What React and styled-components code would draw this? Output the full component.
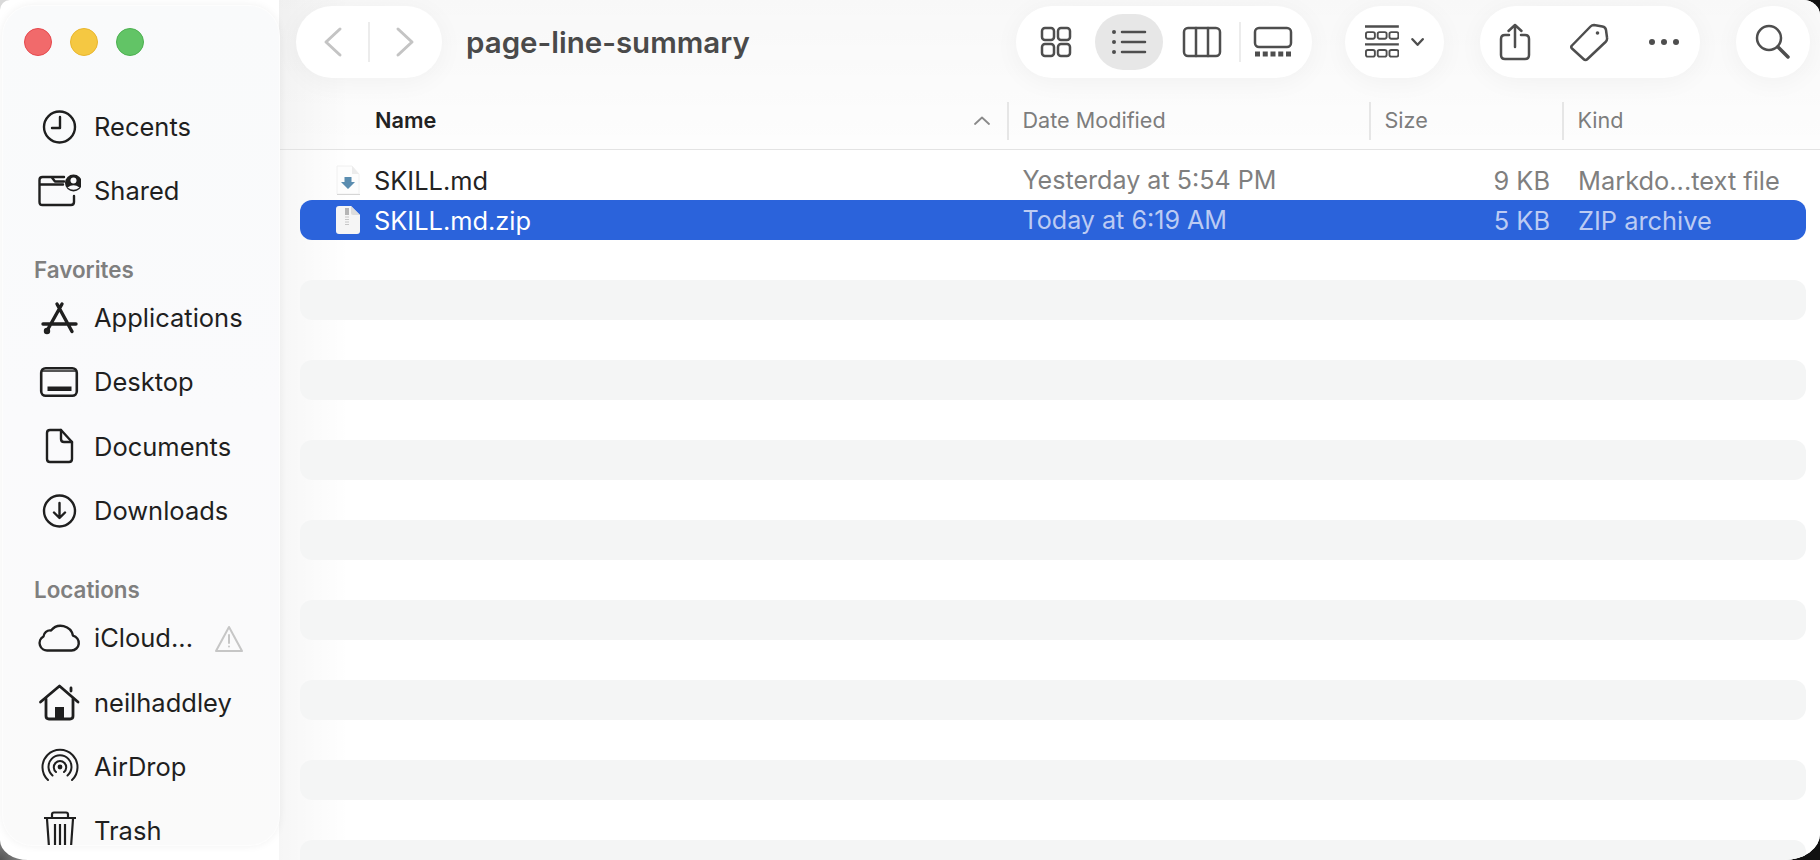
import styled, { createGlobalStyle } from 'styled-components'

const GlobalStyle = createGlobalStyle`
  html, body {
    margin: 0;
    padding: 0;
    overflow: hidden;
    background: #111;
  }
  #root {
    width: 1820px;
    height: 860px;
  }
`

const Desktop = styled.div`
  width: 1820px;
  height: 860px;
  background:
    radial-gradient(circle at 0 0, #d9d9d9 0, #d9d9d9 14px, transparent 15px),
    radial-gradient(circle at 0 100%, #555 0, #8a8a8a 24px, transparent 40px),
    #111;
  font-family: Inter, "Liberation Sans", sans-serif;
`

const Window = styled.div`
  display: flex;
  width: 100%;
  height: 100%;
  overflow: hidden;
  background: #fff;
  border-radius: 10px 17px 36px 28px / 10px 15px 26px 20px;
`

const Sidebar = styled.aside`
  width: 276px;
  flex-shrink: 0;
  margin: 6px 0 15px 3px;
  overflow: hidden;
  background: linear-gradient(180deg, #f9fafb 0, #fafafc 50%, #fafafa 100%);
  border-radius: 30px;
  box-shadow: 0 0 0 1px #fdfdfd, 0 0 10px rgba(0, 0, 0, 0.07);
  position: relative;
  z-index: 1;
`

const Lights = styled.div`
  display: flex;
  gap: 18px;
  padding: 22px 0 38.5px 21px;
`

const Light = styled.span`
  width: 28px;
  height: 28px;
  box-sizing: border-box;
  border-radius: 50%;
  background: ${props => props.$fill};
  border: 1px solid ${props => props.$edge};
`

const SectionLabel = styled.div`
  height: 30px;
  line-height: 30px;
  margin: 32.5px 0 0.8px;
  padding-left: 31px;
  font-size: 22.4px;
  font-weight: 600;
  color: #7f7f7f;
`

const NavRow = styled.div`
  display: flex;
  align-items: center;
  height: 64.2px;
  padding-left: 34px;
  gap: 13px;
  font-size: 25.5px;
  line-height: 26px;
  color: #1f1f1f;
  white-space: nowrap;
  svg { flex-shrink: 0; }
`

const WarnMark = styled.svg`
  margin-left: 8px;
  margin-top: 2px;
`

const Main = styled.main`
  flex: 1;
  min-width: 0;
  display: flex;
  flex-direction: column;
  background:
    linear-gradient(90deg, rgba(0, 0, 0, 0.035), rgba(0, 0, 0, 0) 70px),
    #fff;
`

const Chrome = styled.div`
  background: linear-gradient(180deg, rgba(0, 0, 0, 0.028) 0, rgba(0, 0, 0, 0.008) 100%);
`

const Toolbar = styled.div`
  display: flex;
  align-items: flex-start;
  padding: 6px 10px 0 17px;
  height: 72px;
`

const Capsule = styled.div`
  display: flex;
  align-items: center;
  flex-shrink: 0;
  height: 72px;
  width: ${props => props.$width}px;
  margin-left: ${props => props.$gap || 0}px;
  padding: 0 ${props => props.$pad || 0}px;
  gap: ${props => props.$space || 0}px;
  box-sizing: border-box;
  background: #fff;
  border-radius: 36px;
  box-shadow: 0 4px 26px rgba(0, 0, 0, 0.045);
`

const Title = styled.h1`
  flex: 1;
  margin: 0 0 0 24px;
  line-height: 72px;
  font-size: 29.5px;
  font-weight: 600;
  color: #4a4a4a;
`

const ToolButton = styled.div`
  display: flex;
  align-items: center;
  justify-content: center;
  flex-shrink: 0;
  height: 56px;
  width: ${props => props.$width}px;
  border-radius: 28px;
  background: ${props => (props.$active ? '#e7e7e7' : 'transparent')};
`

const ToolDivider = styled.span`
  width: 2px;
  height: 40px;
  flex-shrink: 0;
  margin-left: ${props => props.$pull || 0}px;
  background: #ececec;
`

const HeaderRow = styled.div`
  display: grid;
  grid-template-columns: 728px 362px 193px 1fr;
  align-items: center;
  height: 38px;
  padding: 24px 0 9px;
  border-bottom: 1.5px solid #e3e3e3;
`

const HeaderCell = styled.div`
  display: flex;
  align-items: center;
  justify-content: space-between;
  box-sizing: border-box;
  height: 38px;
  padding-left: ${props => (props.$name ? 96 : 13.5)}px;
  padding-right: ${props => (props.$name ? 17 : 0)}px;
  padding-bottom: 2px;
  border-left: ${props => (props.$name ? 'none' : '2px solid #e6e6e6')};
  font-size: ${props => (props.$name ? 21.7 : 21.6)}px;
  font-weight: ${props => (props.$name ? 600 : 400)};
  color: ${props => (props.$name ? '#222' : '#7d7d7d')};
`

const FileList = styled.div`
  flex: 1;
  padding: 9.5px 14px 0 21px;
  overflow: hidden;
`

const FileRow = styled.div`
  display: grid;
  grid-template-columns: 707px 362px 193px 1fr;
  align-items: center;
  box-sizing: border-box;
  height: 40px;
  padding-top: 1px;
  border-radius: 12px;
  font-size: 25.4px;
  white-space: nowrap;
  background: ${props => (props.$selected ? '#2b63db' : props.$striped ? '#f4f5f5' : 'transparent')};
`

const NameCell = styled.div`
  display: flex;
  align-items: center;
  gap: 14px;
  padding-left: 36px;
  color: ${props => (props.$selected ? '#fff' : '#232323')};
`

const DateCell = styled.div`
  padding-left: 15.5px;
  font-size: 25.1px;
  color: ${props => (props.$selected ? '#bccbf3' : '#7f7f7f')};
`

const SizeCell = styled.div`
  padding-right: 12px;
  text-align: right;
  color: ${props => (props.$selected ? '#bccbf3' : '#7f7f7f')};
`

const KindCell = styled.div`
  padding-left: 16px;
  color: ${props => (props.$selected ? '#bccbf3' : '#7f7f7f')};
`

const NavIcon = ({ children }) => (
  <svg width="44" height="44" viewBox="0 0 44 44" fill="none" stroke="#1f1f1f" strokeWidth="2.4" strokeLinecap="round" strokeLinejoin="round">
    {children}
  </svg>
)

const navTop = [
  {
    label: 'Recents',
    icon: (
      <>
        <circle cx="22.5" cy="22" r="15.5" />
        <path d="M23 12v11h-8" />
      </>
    ),
  },
  {
    label: 'Shared',
    icon: (
      <>
        <path d="M27 8H14.5l3.500 4.500H27M2.500 32V11q0-3 3-3h9M2.500 15.500H26M37 27v6q0 3-3 3H5.500q-3 0-3-3V30" />
        <circle cx="36.500" cy="14" r="8.500" fill="#1f1f1f" stroke="none" />
        <circle cx="36.500" cy="11.500" r="3" fill="#f9fafc" stroke="none" />
        <path d="M30.500 18.500q6-4.500 12 0q-6 4.500-12 0z" fill="#f9fafc" stroke="none" />
      </>
    ),
  },
]

const navFavorites = [
  {
    label: 'Applications',
    icon: (
      <g strokeWidth="3.4">
        <path d="M20 8l15 27.500M25 8L11 33M6 28h33" />
        <circle cx="10" cy="35" r="1.5" />
      </g>
    ),
  },
  {
    label: 'Desktop',
    icon: (
      <>
        <rect x="4.2" y="8.2" width="35.6" height="27.6" rx="4.5" strokeWidth="2.6" />
        <path d="M5 11h34" strokeWidth="1.6" />
        <rect x="10.5" y="26.500" width="24" height="4.5" fill="#1f1f1f" stroke="none" />
      </>
    ),
  },
  {
    label: 'Documents',
    icon: (
      <>
        <path d="M10 8q0-3 3-3h11l11 12v17q0 3-3 3H13q-3 0-3-3z" />
        <path d="M24 5v9q0 3 3 3h8" />
      </>
    ),
  },
  {
    label: 'Downloads',
    icon: (
      <>
        <circle cx="22.5" cy="22" r="15.5" />
        <path d="M22.5 14v14M17 23.500l5.500 5.500 5.500-5.500" />
      </>
    ),
  },
]

const navLocations = [
  {
    label: 'iCloud...',
    warn: true,
    icon: (
      <path d="M11 34.500h23.500a7.500 7.500 0 0 0 1.500-14.800A12.500 12.500 0 0 0 14 14.500a6.500 6.500 0 0 0-7.500 6A7.500 7.500 0 0 0 11 34.500z" />
    ),
  },
  {
    label: 'neilhaddley',
    icon: (
      <>
        <path d="M3.500 21L22.500 5 41 21M34 10V7" strokeWidth="2.8" />
        <path d="M9 18v17q0 3 3 3h21q3 0 3-3V18" strokeWidth="2.8" />
        <rect x="18" y="26" width="9" height="12" fill="#1f1f1f" stroke="none" />
      </>
    ),
  },
  {
    label: 'AirDrop',
    icon: (
      <>
        <path d="M11 35A17.500 17.500 0 1 1 35 35M15.500 30.500a11.500 11.500 0 1 1 15 0M19 27a6.200 6.200 0 1 1 8 0" strokeWidth="2" />
        <circle cx="23" cy="22" r="2.4" fill="#1f1f1f" stroke="none" />
      </>
    ),
  },
  {
    label: 'Trash',
    icon: (
      <path d="M7 9h32M15 9V5.500q0-2 2-2h12q2 0 2 2V9M10 10l2 28h22l2-28M18 15v22M23 15v22M28 15v22" strokeWidth="2.2" strokeLinecap="butt" />
    ),
  },
]

const NavSection = ({ items }) =>
  items.map(item => (
    <NavRow key={item.label}>
      <NavIcon>{item.icon}</NavIcon>
      {item.label}
      {item.warn && (
        <WarnMark width="30" height="28" viewBox="0 0 30 28" fill="none" stroke="#c6c6c6" strokeWidth="2" strokeLinejoin="round">
          <path d="M15 2L28 26H2z" />
          <path d="M15 10v8" strokeLinecap="round" />
          <circle cx="15" cy="21.5" r="1" fill="#c6c6c6" stroke="none" />
        </WarnMark>
      )}
    </NavRow>
  ))

const ToolIcon = ({ w, h, children }) => (
  <svg width={w} height={h} viewBox={`0 0 ${w} ${h}`} fill="none" stroke="#4e4e4e" strokeWidth="2.5" strokeLinecap="round" strokeLinejoin="round">
    {children}
  </svg>
)

const rows = [
  { name: 'SKILL.md', date: 'Yesterday at 5:54 PM', size: '9 KB', kind: 'Markdo...text file', fileType: 'md' },
  { name: 'SKILL.md.zip', date: 'Today at 6:19 AM', size: '5 KB', kind: 'ZIP archive', fileType: 'zip', selected: true },
  ...Array.from({ length: 16 }, () => ({})),
]

const FileIcon = ({ type }) =>
  type === 'md' ? (
    <svg width="24" height="30" viewBox="0 0 24 30">
      <path d="M1 1h15l7 8v20H1z" fill="#fdfdfd" stroke="#f0f0f0" />
      <path d="M16 1v8h7z" fill="#ececec" />
      <path d="M1 29.5h23" stroke="#d6d6d6" />
      <path d="M8.500 12h7v5h3.500l-7 7-7-7h3.500z" fill="#5b8db0" />
    </svg>
  ) : (
    <svg width="24" height="28" viewBox="0 0 24 28">
      <path d="M3 0h12l9 9v16q0 3-3 3H3q-3 0-3-3V3q0-3 3-3z" fill="#f5f5f5" />
      <path d="M15 0l9 9h-7q-2 0-2-2z" fill="#dcdcdc" />
      <rect x="9" y="2" width="4" height="7" fill="#b5b5b5" />
      <path d="M9 11h4M9 13.5h4M9 16h4M9 18.5h4" stroke="#c6c6c6" />
    </svg>
  )

export default function App() {
  return (
    <Desktop>
      <GlobalStyle />
      <Window>
        <Sidebar>
          <Lights>
            <Light $fill="#f16a6b" $edge="#e5484d" />
            <Light $fill="#f5c842" $edge="#e8b52e" />
            <Light $fill="#62c466" $edge="#4cb050" />
          </Lights>
          <NavSection items={navTop} />
          <SectionLabel>Favorites</SectionLabel>
          <NavSection items={navFavorites} />
          <SectionLabel>Locations</SectionLabel>
          <NavSection items={navLocations} />
        </Sidebar>

        <Main>
          <Chrome>
            <Toolbar>
              <Capsule $width={146} $pad={21} $space={19}>
                <ToolButton $width={32}>
                  <svg width="20" height="32" viewBox="0 0 20 32" fill="none" stroke="#c4c4c4" strokeWidth="3" strokeLinecap="round" strokeLinejoin="round">
                    <path d="M17 3L3 16l14 13" />
                  </svg>
                </ToolButton>
                <ToolDivider />
                <ToolButton $width={32}>
                  <svg width="20" height="32" viewBox="0 0 20 32" fill="none" stroke="#c4c4c4" strokeWidth="3" strokeLinecap="round" strokeLinejoin="round">
                    <path d="M3 3l14 13L3 29" />
                  </svg>
                </ToolButton>
              </Capsule>
              <Title>page-line-summary</Title>
              <Capsule $width={296} $pad={6} $space={4.5}>
                <ToolButton $width={68}>
                  <ToolIcon w={32} h={32}>
                    <rect x="2" y="2" width="12" height="12" rx="3" />
                    <rect x="18" y="2" width="12" height="12" rx="3" />
                    <rect x="2" y="18" width="12" height="12" rx="3" />
                    <rect x="18" y="18" width="12" height="12" rx="3" />
                  </ToolIcon>
                </ToolButton>
                <ToolButton $width={68} $active>
                  <ToolIcon w={36} h={28}>
                    <path d="M11 4h23M11 14h23M11 24h23" />
                    <circle cx="3" cy="4" r="2" fill="#4e4e4e" stroke="none" />
                    <circle cx="3" cy="14" r="2" fill="#4e4e4e" stroke="none" />
                    <circle cx="3" cy="24" r="2" fill="#4e4e4e" stroke="none" />
                  </ToolIcon>
                </ToolButton>
                <ToolButton $width={70}>
                  <ToolIcon w={40} h={32}>
                    <rect x="2" y="2" width="36" height="28" rx="4" />
                    <path d="M14 2v28M26 2v28" />
                  </ToolIcon>
                </ToolButton>
                <ToolDivider $pull={-3} />
                <ToolButton $width={56}>
                  <ToolIcon w={40} h={32}>
                    <rect x="2" y="2" width="36" height="19" rx="4" />
                    <path d="M2 28h36" strokeWidth="5" strokeDasharray="5 2.75" strokeLinecap="butt" />
                  </ToolIcon>
                </ToolButton>
              </Capsule>
              <Capsule $width={99} $gap={33} $pad={20} $space={12}>
                <ToolIcon w={36} h={36}>
                  <path d="M0 1.5h36M0 20.5h36" strokeLinecap="butt" />
                  <g strokeWidth="2">
                    <rect x="1" y="7.5" width="9.5" height="7" rx="2" />
                    <rect x="13.5" y="7.5" width="9.5" height="7" rx="2" />
                    <rect x="26" y="7.5" width="9.5" height="7" rx="2" />
                    <rect x="1" y="26.5" width="9.5" height="7" rx="2" />
                    <rect x="13.5" y="26.5" width="9.5" height="7" rx="2" />
                    <rect x="26" y="26.5" width="9.5" height="7" rx="2" />
                  </g>
                </ToolIcon>
                <ToolIcon w={14} h={10}>
                  <path d="M1.5 2L7 8l5.500-6" />
                </ToolIcon>
              </Capsule>
              <Capsule $width={220} $gap={36}>
                <ToolButton $width={69}>
                  <ToolIcon w={32} h={38}>
                    <path d="M10 12H6q-4 0-4 4v16q0 4 4 4h20q4 0 4-4V16q0-4-4-4h-4" />
                    <path d="M16 24V2M9.500 8L16 2l6.500 6" />
                  </ToolIcon>
                </ToolButton>
                <ToolButton $width={79}>
                  <ToolIcon w={40} h={40}>
                    <path d="M3 23.500L21.500 4.500q1.500-1.500 3.500-1.500l8.500 1.500q3 .5 3.500 3.500l1 7.500q.5 2.500-1.500 4.500L18.500 37q-2 2-4 0L3 26.500q-1.500-1.500 0-3z" />
                    <circle cx="28.5" cy="11" r="1.8" fill="#4e4e4e" stroke="none" />
                  </ToolIcon>
                </ToolButton>
                <ToolButton $width={72}>
                  <ToolIcon w={30} h={6}>
                    <circle cx="3" cy="3" r="3" fill="#4e4e4e" stroke="none" />
                    <circle cx="15" cy="3" r="3" fill="#4e4e4e" stroke="none" />
                    <circle cx="27" cy="3" r="3" fill="#4e4e4e" stroke="none" />
                  </ToolIcon>
                </ToolButton>
              </Capsule>
              <Capsule $width={74} $gap={36} $pad={19}>
                <ToolIcon w={36} h={36}>
                  <circle cx="14" cy="14" r="12" />
                  <path d="M23 23l10 10" strokeWidth="3.5" />
                </ToolIcon>
              </Capsule>
            </Toolbar>
            <HeaderRow>
              <HeaderCell $name>
                Name
                <svg width="16" height="9" viewBox="0 0 16 9" fill="none" stroke="#8a8a8a" strokeWidth="1.8" strokeLinecap="round" strokeLinejoin="round">
                  <path d="M1 8l7-6.500L15 8" />
                </svg>
              </HeaderCell>
              <HeaderCell>Date Modified</HeaderCell>
              <HeaderCell>Size</HeaderCell>
              <HeaderCell>Kind</HeaderCell>
            </HeaderRow>
          </Chrome>

          <FileList>
            {rows.map((row, i) => (
              <FileRow key={i} $selected={row.selected} $striped={i >= 3 && i % 2 === 1}>
                {row.name && (
                  <>
                    <NameCell $selected={row.selected}>
                      <FileIcon type={row.fileType} />
                      {row.name}
                    </NameCell>
                    <DateCell $selected={row.selected}>{row.date}</DateCell>
                    <SizeCell $selected={row.selected}>{row.size}</SizeCell>
                    <KindCell $selected={row.selected}>{row.kind}</KindCell>
                  </>
                )}
              </FileRow>
            ))}
          </FileList>
        </Main>
      </Window>
    </Desktop>
  )
}
